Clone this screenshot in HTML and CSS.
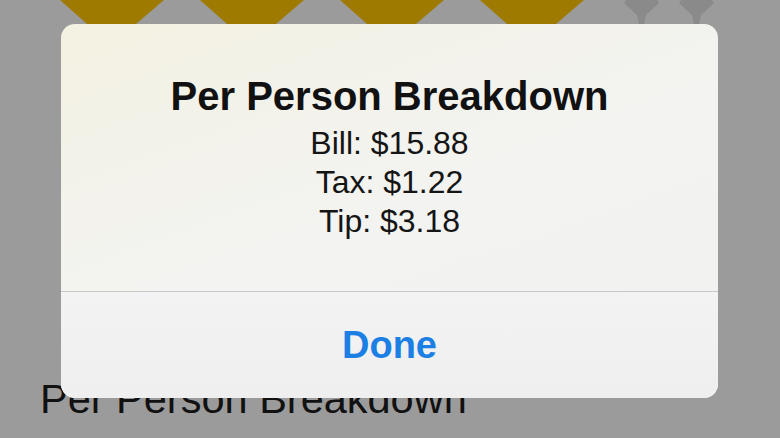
FILE: index.html
```html
<!DOCTYPE html>
<html>
<head>
    <title>Per Person Breakdown</title>
    <link rel="stylesheet" href="styles.css">
</head>
<body>
    <div class="page">
        <div class="stars">
            <div class="gold-stars">
                <svg class="gold" viewBox="0 0 104 24"><polygon points="0,0 104,0 76,24 27,24"/></svg>
                <svg class="gold" viewBox="0 0 104 24"><polygon points="0,0 104,0 76,24 27,24"/></svg>
                <svg class="gold" viewBox="0 0 104 24"><polygon points="0,0 104,0 76,24 27,24"/></svg>
                <svg class="gold" viewBox="0 0 104 24"><polygon points="0,0 104,0 76,24 27,24"/></svg>
            </div>
            <div class="gray-stars">
                <svg class="gray" viewBox="0 0 37 24"><polygon points="3,0 34,0 36,3 23,15 21,24 16,24 14,15 1,3"/></svg>
                <svg class="gray" viewBox="0 0 37 24"><polygon points="3,0 34,0 36,3 23,15 21,24 16,24 14,15 1,3"/></svg>
            </div>
        </div>
        <h1 class="page-title">Per Person Breakdown</h1>
    </div>

    <div class="alert">
        <div class="alert-body">
            <h2 class="alert-title">Per Person Breakdown</h2>
            <div class="alert-line">Bill: $15.88</div>
            <div class="alert-line">Tax: $1.22</div>
            <div class="alert-line">Tip: $3.18</div>
        </div>
        <div class="alert-btn">Done</div>
    </div>
</body>
</html>
```

FILE: styles.css
```css
body { margin: 0; width: 780px; height: 438px; overflow: hidden; background: #9b9b9b; font-family: "Liberation Sans", Arial, sans-serif; color: #111; }
.page { height: 438px; }
.stars { display: flex; height: 24px; padding-left: 60px; }
.gold-stars { display: flex; gap: 36px; }
.gold { width: 104px; height: 24px; display: block; }
.gold polygon { fill: #9e7b00; }
.gray-stars { display: flex; gap: 18px; margin-left: 39px; }
.gray { width: 37px; height: 24px; display: block; }
.gray polygon { fill: #8a8a8a; }
.page-title { margin: 351px 0 0 40px; font-size: 41.5px; line-height: 47px; font-weight: normal; color: #111; }

.alert { position: absolute; left: 61px; top: 24px; width: 657px; height: 374px; border-radius: 14px; overflow: hidden; display: flex; flex-direction: column; background: linear-gradient(160deg, #f4f2e1 0%, #f3f2ea 25%, #f3f3f1 50%, #f1f1f1 100%); }
.alert-body { height: 268px; padding-top: 49px; box-sizing: border-box; text-align: center; border-bottom: 1px solid #c9c9c9; }
.alert-title { margin: 0 0 5px; font-size: 40px; line-height: 46px; font-weight: bold; color: #111; }
.alert-line { font-size: 32px; line-height: 39px; color: #151515; }
.alert-btn { flex: 1; padding-top: 31px; text-align: center; font-size: 38px; line-height: 45px; font-weight: bold; color: #1b7fe3; background: linear-gradient(180deg, #f3f3f3, #efefef); }
```
